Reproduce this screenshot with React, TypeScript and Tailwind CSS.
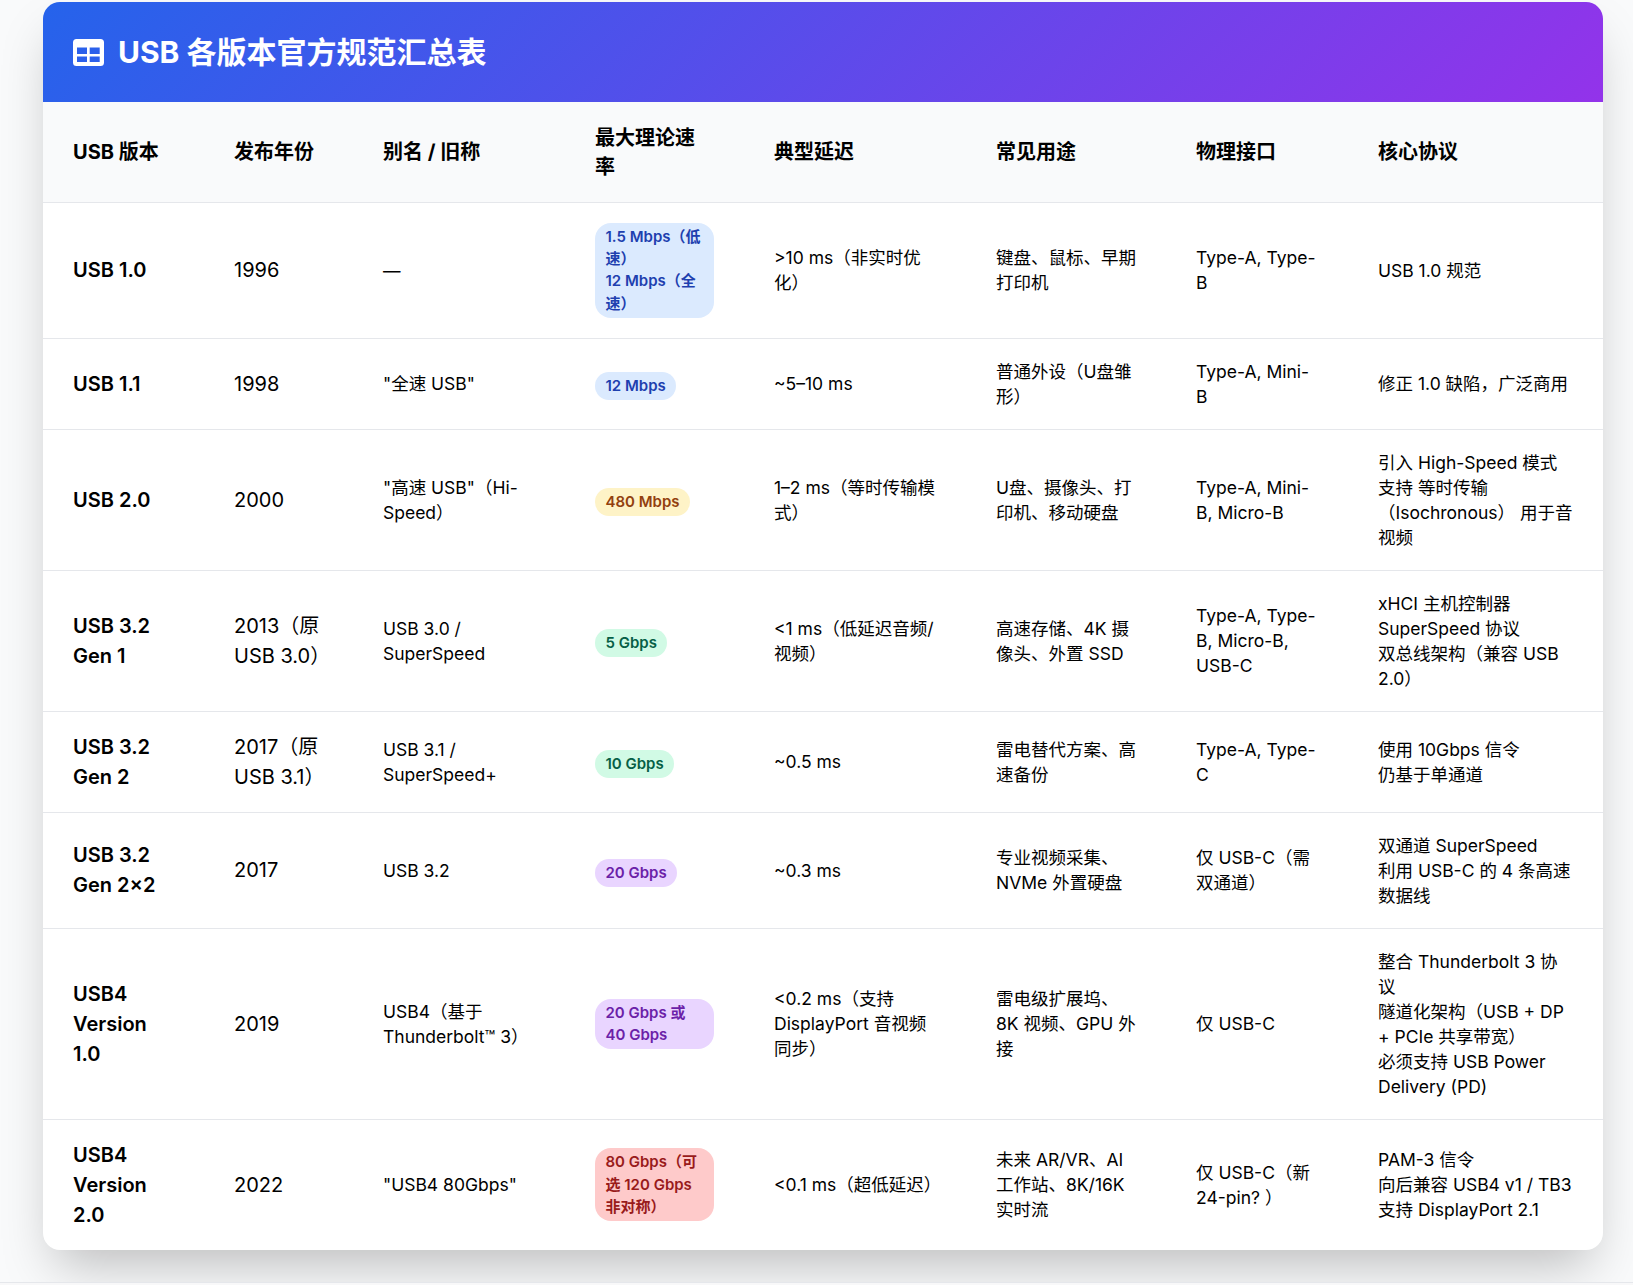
import React from "react";

type Row = {
  v: string;
  y: string;
  a: string;
  s: string[];
  b: string;
  l: string;
  u: string;
  p: string;
  c: string[];
  one?: boolean;
};

const rows: Row[] = [
  { v: "USB 1.0", y: "1996", a: "—", s: ["1.5 Mbps（低速）", "12 Mbps（全速）"], b: "bg-[#dbeafe] text-[#1e40af]", l: ">10 ms（非实时优化）", u: "键盘、鼠标、早期打印机", p: "Type-A, Type-B", c: ["USB 1.0 规范"] },
  { v: "USB 1.1", y: "1998", a: '"全速 USB"', s: ["12 Mbps"], b: "bg-[#dbeafe] text-[#1e40af]", l: "~5–10 ms", u: "普通外设（U盘雏形）", p: "Type-A, Mini-B", c: ["修正 1.0 缺陷，广泛商用"], one: true },
  { v: "USB 2.0", y: "2000", a: '"高速 USB"（Hi-Speed）', s: ["480 Mbps"], b: "bg-[#fef3c7] text-[#92400e]", l: "1–2 ms（等时传输模式）", u: "U盘、摄像头、打印机、移动硬盘", p: "Type-A, Mini-B, Micro-B", c: ["引入 High-Speed 模式", "支持 等时传输（Isochronous） 用于音视频"], one: true },
  { v: "USB 3.2 Gen 1", y: "2013（原 USB 3.0）", a: "USB 3.0 / SuperSpeed", s: ["5 Gbps"], b: "bg-[#d1fae5] text-[#065f46]", l: "<1 ms（低延迟音频/视频）", u: "高速存储、4K 摄像头、外置 SSD", p: "Type-A, Type-B, Micro-B, USB-C", c: ["xHCI 主机控制器", "SuperSpeed 协议", "双总线架构（兼容 USB 2.0）"], one: true },
  { v: "USB 3.2 Gen 2", y: "2017（原 USB 3.1）", a: "USB 3.1 / SuperSpeed+", s: ["10 Gbps"], b: "bg-[#d1fae5] text-[#065f46]", l: "~0.5 ms", u: "雷电替代方案、高速备份", p: "Type-A, Type-C", c: ["使用 10Gbps 信令", "仍基于单通道"], one: true },
  { v: "USB 3.2 Gen 2×2", y: "2017", a: "USB 3.2", s: ["20 Gbps"], b: "bg-[#e9d5ff] text-[#6b21a8]", l: "~0.3 ms", u: "专业视频采集、NVMe 外置硬盘", p: "仅 USB-C（需双通道）", c: ["双通道 SuperSpeed", "利用 USB-C 的 4 条高速数据线"], one: true },
  { v: "USB4 Version 1.0", y: "2019", a: "USB4（基于 Thunderbolt™ 3）", s: ["20 Gbps 或 40 Gbps"], b: "bg-[#e9d5ff] text-[#6b21a8]", l: "<0.2 ms（支持 DisplayPort 音视频同步）", u: "雷电级扩展坞、8K 视频、GPU 外接", p: "仅 USB-C", c: ["整合 Thunderbolt 3 协议", "隧道化架构（USB + DP + PCIe 共享带宽）", "必须支持 USB Power Delivery (PD)"] },
  { v: "USB4 Version 2.0", y: "2022", a: '"USB4 80Gbps"', s: ["80 Gbps（可选 120 Gbps 非对称）"], b: "bg-[#fecaca] text-[#991b1b]", l: "<0.1 ms（超低延迟）", u: "未来 AR/VR、AI 工作站、8K/16K 实时流", p: "仅 USB-C（新 24-pin? ）", c: ["PAM-3 信令", "向后兼容 USB4 v1 / TB3", "支持 DisplayPort 2.1"] },
];

const headers = ["USB 版本", "发布年份", "别名 / 旧称", "最大理论速率", "典型延迟", "常见用途", "物理接口", "核心协议"];
const widths = [161, 149, 212, 179, 222, 200, 182, 255];

function TableIcon() {
  return (
    <svg width="31" height="27" viewBox="0 0 31 27" aria-hidden="true" className="shrink-0">
      <path
        fill="#fff"
        fillRule="evenodd"
        d="M3.5 0h24A3.5 3.5 0 0 1 31 3.500v20a3.500 3.500 0 0 1-3.500 3.500h-24A3.500 3.500 0 0 1 0 23.500v-20A3.500 3.500 0 0 1 3.500 0ZM4 8.400V15h10V8.400H4Zm12.700 0V15h10V8.400h-10ZM4 17.600V23h10v-5.400H4Zm12.700 0V23h10v-5.400h-10Z"
      />
    </svg>
  );
}

export default function App() {
  return (
    <div className="min-h-[1285px] bg-[#f8f8f9]">
      <div className="h-[1283px] bg-[#f9fafb] border-b border-[#e5e7eb] pt-[2px] pl-[43px] font-['Inter','Noto_Sans_CJK_SC',sans-serif] text-black overflow-hidden">
        <div className="w-[1560px] rounded-[17px] overflow-hidden bg-white shadow-[0_26px_52px_-12.500px_rgba(0,0,0,0.25)]">
          <div className="h-[100px] flex items-center gap-[14.500px] pl-[29.500px] bg-[linear-gradient(135deg,#2563eb,#9333ea)]">
            <TableIcon />
            <h1 className="text-[30px] leading-[40px] font-bold text-white">USB 各版本官方规范汇总表</h1>
          </div>
          <table className="w-[1560px] table-fixed border-collapse">
            <colgroup>
              {widths.map((w, i) => (
                <col key={i} style={{ width: w }} />
              ))}
            </colgroup>
            <thead>
              <tr className="bg-[#f9fafb] border-b border-[#e5e7eb]">
                {headers.map((h) => (
                  <th key={h} className="px-[30px] pt-[21.500px] pb-[20px] text-left text-[20px] leading-[29.170px] font-bold">
                    {h}
                  </th>
                ))}
              </tr>
            </thead>
            <tbody>
              {rows.map((r, i) => (
                <tr key={r.v} className={i < rows.length - 1 ? "border-b border-[#e5e7eb]" : ""}>
                  <td className="px-[30px] py-[20px] text-[20px] leading-[30px] font-semibold">{r.v}</td>
                  <td className="px-[30px] py-[20px] text-[20px] leading-[30px]">{r.y}</td>
                  <td className="px-[30px] py-[20px] text-[17.500px] leading-[25px]">{r.a}</td>
                  <td className="px-[30px] py-[20px] text-[17.500px] leading-[25px]">
                    <span className={`inline-block rounded-[16px] px-[10.500px] py-[3px] text-[15px] leading-[22.250px] font-semibold ${r.one ? "mt-[5px]" : ""} ${r.b}`}>
                      {r.s.map((t) => (
                        <span key={t} className="block">{t}</span>
                      ))}
                    </span>
                  </td>
                  <td className="px-[30px] py-[20px] text-[17.500px] leading-[25px]">{r.l}</td>
                  <td className="px-[30px] py-[20px] text-[17.500px] leading-[25px]">{r.u}</td>
                  <td className="px-[30px] py-[20px] text-[17.500px] leading-[25px]">{r.p}</td>
                  <td className="px-[30px] py-[20px] text-[17.500px] leading-[25px]">
                    {r.c.map((t) => (
                      <span key={t} className="block">{t}</span>
                    ))}
                  </td>
                </tr>
              ))}
            </tbody>
          </table>
        </div>
      </div>
    </div>
  );
}
